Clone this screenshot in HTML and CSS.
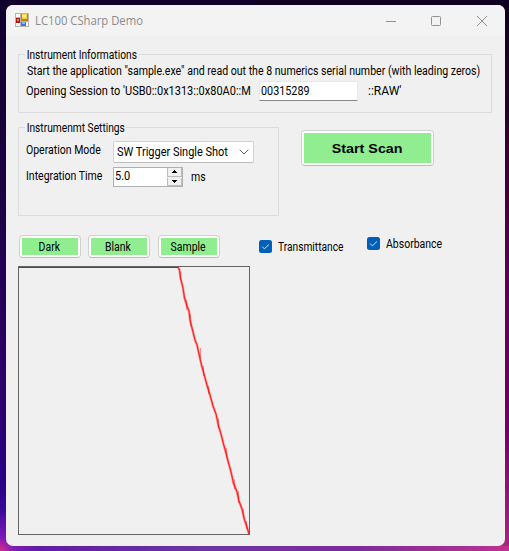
FILE: index.html
```html
<!DOCTYPE html>
<html lang="en">
<head>
<meta charset="utf-8">
<title>LC100 CSharp Demo</title>
<link rel="stylesheet" href="styles.css">
</head>
<body>
<main class="window">
  <header class="titlebar">
    <svg class="app-icon" width="14" height="14" viewBox="0 0 14 14">
      <path fill="#b5b5b5" d="M0 0h14v14H0z"/>
      <path fill="#fafafa" d="M1 1h4v3H1zM1 10h4v3H1zM11 9h2v4h-2z"/>
      <path fill="#a91c10" d="M1 5h4v5H1z"/><path fill="#ef796d" d="M2 6h2v2H2z"/>
      <path fill="#b98208" d="M6 1h7v7H6z"/><path fill="#ffd33d" d="M7 1h5v5H7z"/><path fill="#ffec91" d="M7 2h4v2H7z"/>
      <path fill="#3c79dd" d="M6 9h5v4H6z"/><path fill="#82b6ff" d="M7 9h3v2H7z"/>
    </svg>
    <span class="title">LC100 CSharp Demo</span>
    <svg class="controls" width="104" height="12" viewBox="0 0 104 12" fill="none" stroke="#929292">
      <path d="M1 6.5h10"/>
      <rect x="46.5" y="1.5" width="9" height="9" rx="1"/>
      <path d="M92 1l10 10M102 1L92 11"/>
    </svg>
  </header>
  <section class="group info">
    <h2 class="legend"><span class="narrow tight">Instrument Informations</span></h2>
    <p class="hint narrow">Start the application "sample.exe" and read out the 8 numerics serial number (with leading zeros)</p>
    <div class="session">
      <label class="session-label" for="serial"><span class="narrow loose">Opening Session to 'USB0::0x1313::0x80A0::M</span></label>
      <div class="serial"><input id="serial" class="narrow" value="00315289"></div>
      <span>::RAW'</span>
    </div>
  </section>
  <div class="middle">
    <section class="group settings">
      <h2 class="legend"><span class="narrow tight">Instrumenmt Settings</span></h2>
      <div class="row mode">
        <span class="label"><span class="narrow">Operation Mode</span></span>
        <div class="combo"><span class="narrow loose">SW Trigger Single Shot</span>
          <svg width="10" height="6" viewBox="0 0 10 6" fill="none" stroke="#666"><path d="M.7.7L5 5 9.3.7"/></svg>
        </div>
      </div>
      <div class="row time">
        <span class="label"><span class="narrow">Integration Time</span></span>
        <div class="numeric"><span class="narrow loose">5.0</span>
          <div class="spin">
            <i><svg width="5" height="3" viewBox="0 0 5 3"><path d="M2 0h1v1h1v1h1v1H0V2h1V1h1z"/></svg></i>
            <i><svg width="5" height="3" viewBox="0 0 5 3"><path d="M0 0h5v1H4v1H3v1H2V2H1V1H0z"/></svg></i>
          </div>
        </div>
        <span class="unit narrow">ms</span>
      </div>
    </section>
    <button class="btn scan"><span><b>Start Scan</b></span></button>
  </div>
  <div class="actions">
    <button class="btn"><span><b>Dark</b></span></button>
    <button class="btn blank"><span><b>Blank</b></span></button>
    <button class="btn sample"><span><b>Sample</b></span></button>
    <div class="check transmittance"><svg width="13" height="13" viewBox="0 0 13 13"><rect width="13" height="13" rx="2.5" fill="#005fb8"/><path d="M3.2 6.7l2.2 2.2 4.5-4.400" fill="none" stroke="#d6e8f7"/></svg><span class="narrow tight">Transmittance</span></div>
    <div class="check absorbance"><svg width="13" height="13" viewBox="0 0 13 13"><rect width="13" height="13" rx="2.5" fill="#005fb8"/><path d="M3.2 6.7l2.2 2.2 4.5-4.400" fill="none" stroke="#d6e8f7"/></svg><span class="narrow">Absorbance</span></div>
  </div>
  <svg class="chart" width="232" height="269" viewBox="0 0 232 269" fill="none">
    <rect x=".5" y=".5" width="231" height="268" stroke="#646464"/>
    <path d="M1 1.500h159.500" stroke="#f00"/>
    <path d="M160 1L161.500 4 162.500 12 165 22 166.500 32 169 40 171 45 172 54 174.500 64 177 74 179 79 181 88 183.500 99 186.500 110 189.500 121 192 129 195 140 198 148 200.500 160 203 168 205.500 178 208 187 210 195 213 206 215.500 217 219 226 221 235 224 243 226.500 254 229 261 231 268" stroke="#f00" stroke-opacity=".3" stroke-width="2.600"/>
    <path d="M160 1L161.500 4 162.500 12 165 22 166.500 32 169 40 171 45 172 54 174.500 64 177 74 179 79 181 88 183.500 99 186.500 110 189.500 121 192 129 195 140 198 148 200.500 160 203 168 205.500 178 208 187 210 195 213 206 215.500 217 219 226 221 235 224 243 226.500 254 229 261 231 268" stroke="#f22" stroke-width="1.200"/>
    <path d="M162.500 6v8M168.500 34v10M172.500 48v12M182.500 82v10M185.500 100v10M190.500 120v8M200.500 152v10M208.500 182v10M216.500 213v10M220.500 225v12M225.500 243v9M228.500 255v8" stroke="#f00" stroke-opacity=".4"/>
  </svg>
</main>
</body>
</html>
```
FILE: styles.css
```css
* { box-sizing: border-box; }
body {
  margin: 0;
  height: 551px;
  padding: 5px 4px 5px 6px;
  overflow: hidden;
  font: 12px/14px Roboto, "Liberation Sans", sans-serif;
  color: #000;
  background:
    radial-gradient(circle at 0 551px, #d92e88 0, rgba(150, 30, 190, .6) 14px, transparent 40px),
    linear-gradient(90deg, #5d16a8, #6c34a5 40%, #7c2c9c 70%, #bd328c) 0 546px / 100% 5px no-repeat,
    linear-gradient(#10002b, #1d0042 35%, #2d006b 70%, #280086 88%, #5514b4) 0 0 / 255px 551px no-repeat,
    linear-gradient(#100020, #330030 25%, #5c004f 50%, #750063 78%, #a82883) 100% 0 / 254px 551px no-repeat,
    linear-gradient(90deg, #10002b, #100020);
}
.window {
  height: 541px;
  padding-left: 12px;
  border-radius: 7px;
  background: #f0f0f0;
  overflow: hidden;
}
.titlebar {
  display: flex;
  align-items: center;
  height: 31px;
  margin-left: -12px;
  padding: 0 16px 0 9px;
  background: #f3f3f3;
}
.title { margin-left: 6px; font: 12px/16px "Open Sans", "Noto Sans", sans-serif; color: #8c8c8c; white-space: nowrap; transform: scaleX(.94); transform-origin: 0 0; }
.controls { margin-left: auto; }
.app-icon { margin-top: -2px; }

/* Condensed dialog lettering */
.narrow { display: inline-block; transform: scaleX(.875); transform-origin: 0 50%; }
.tight { transform: scaleX(.85); }
.loose { transform: scaleX(.915); }

.group { border: 1px solid #dcdcdc; }
.legend { display: flex; margin: -7px 0 0 6px; font-size: 12px; font-weight: 400; line-height: 14px; }
.legend span { padding: 0 2px; background: #f0f0f0; }
.info { width: 474px; height: 59px; margin-top: 18px; }
.hint { display: block; width: 530px; margin: 2px 0 0 8px; white-space: nowrap; transform: scaleX(.881); }
.session { display: flex; align-items: center; height: 20px; margin: 3px 0 0 7px; white-space: nowrap; }
.session-label { width: 233px; margin-top: -1px; }
.serial {
  width: 99px; height: 20px; margin-right: 10px; padding: 0 1px; overflow: hidden;
  border: 1px solid #e8e8e8; border-bottom-color: #868686; border-radius: 1px;
  background: #fff;
}
.serial input { width: 100%; height: 18px; padding: 0; border: 0; outline: 0; font: inherit; background: none; transform: scaleX(.9); }
.middle { display: flex; margin-top: 14px; }
.settings { width: 261px; height: 89px; }
.row { display: flex; align-items: center; margin-left: 7px; white-space: nowrap; }
.mode { margin-top: 6px; }
.time { margin-top: 4px; }
.label { width: 87px; }
.mode .label { margin-top: -4px; }
.time .label { margin-top: -2px; }
.combo {
  display: flex; align-items: center; justify-content: space-between;
  width: 141px; height: 22px; padding: 0 4px 0 3px;
  border: 1px solid #d2d2d2; border-bottom-color: #bbb; border-radius: 2px; background: #fff;
}
.numeric {
  display: flex; justify-content: space-between;
  width: 70px; height: 20px; padding-left: 1px;
  border: 1px solid #adb0b5; line-height: 17px; background: #fff;
}
.spin { display: flex; flex-direction: column; gap: 1px; width: 15px; background: #f0f0f0; }
.spin i { display: grid; flex: 1; place-items: center; border: 1px solid #bcbcbc; border-width: 0 1px 1px; }
.unit { margin-left: 8px; }
.btn {
  width: 62px; height: 23px; padding: 2px;
  border: 1px solid #d0d0d0; border-bottom-color: #bcbcbc; border-radius: 4px;
  background: #fdfdfd; font: inherit; color: #000;
}
.btn span { display: grid; height: 100%; padding-right: 2px; place-items: center; background: #90ee90; }
.btn b { font-weight: 400; transform: scaleX(.87); }
.scan { width: 133px; height: 36px; margin: 3px 0 0 22px; font: 13px/16px "Liberation Sans", sans-serif; }
.scan span { padding: 2px 0 0; }
.scan b { font-weight: 700; transform: scaleX(1.1); }
.actions { display: flex; height: 31px; margin-top: 19px; padding-left: 1px; }
.blank { margin-left: 7px; }
.sample { margin-left: 8px; }
.check { display: flex; gap: 6px; height: 14px; white-space: nowrap; }
.transmittance { width: 108px; margin: 5px 0 0 39px; }
.absorbance { margin-top: 2px; }
.chart { display: block; }
```
